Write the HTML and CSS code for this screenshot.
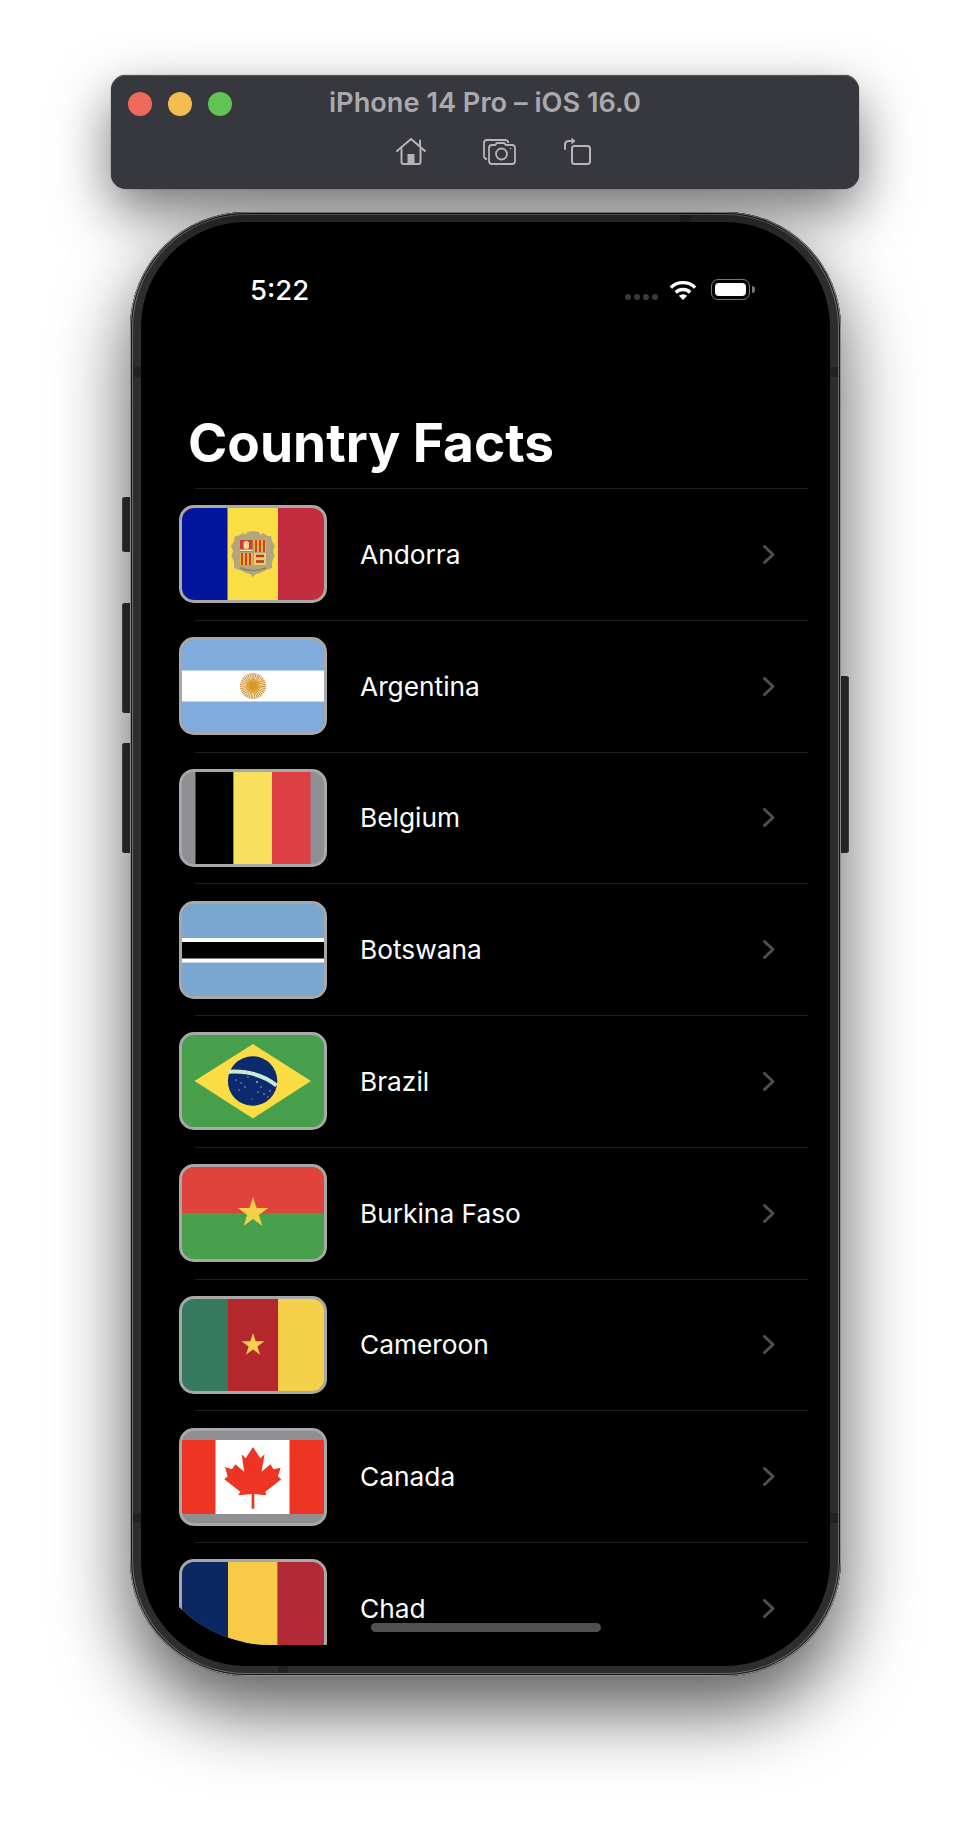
FILE: index.html
```html
<!DOCTYPE html>
<html lang="en">
<head>
    <meta charset="UTF-8">
    <meta name="viewport" content="width=device-width, initial-scale=1.0">
    <title>Country Facts</title>
    <link rel="stylesheet" href="styles.css">
</head>
<body>
    <header class="sim-bar">
        <div class="sim-top">
            <div class="lights">
                <span class="light light-red"></span>
                <span class="light light-yellow"></span>
                <span class="light light-green"></span>
            </div>
            <div class="sim-title">iPhone 14 Pro – iOS 16.0</div>
        </div>
        <div class="sim-tools">
            <svg class="tool tool-home" viewBox="0 0 30 27" fill="none" stroke="#b4b4b9" stroke-width="2" stroke-linejoin="round" stroke-linecap="round">
                <path d="M1 13 L15 1 L29 13"/>
                <path d="M24 8 V2.5"/>
                <path d="M5.5 11 V24 Q5.5 26 7.5 26 H22.500 Q24.500 26 24.500 24 V11"/>
                <rect x="11.500" y="16" width="7" height="10" fill="#b4b4b9" stroke="none"/>
            </svg>
            <svg class="tool tool-shot" viewBox="0 0 33 26" fill="none" stroke="#b4b4b9" stroke-width="1.800" stroke-linejoin="round">
                <path d="M4 20 Q1 20 1 17 V4 Q1 1 4 1 H22 Q25 1 25.500 4"/>
                <path d="M6 9 Q6 6 9 6 H12 L14 4 H21 L23 6 H29 Q32 6 32 9 V22 Q32 25 29 25 H9 Q6 25 6 22 Z"/>
                <circle cx="18.500" cy="15" r="5.500"/>
                <circle cx="27.500" cy="9.500" r="0.800" fill="#b4b4b9" stroke="none"/>
            </svg>
            <svg class="tool tool-rotate" viewBox="0 0 27 28" fill="none" stroke="#b4b4b9" stroke-width="2" stroke-linejoin="round" stroke-linecap="round">
                <rect x="8" y="9" width="18" height="18" rx="2.500"/>
                <path d="M1 12 V7.500 Q1 4 5 4 H8"/>
                <path d="M7.500 0.500 L11.500 4 L7.500 7.500 Z" fill="#b4b4b9" stroke="none"/>
            </svg>
        </div>
    </header>

    <div class="phone">
        <span class="side-btn btn-mute"></span>
        <span class="side-btn btn-up"></span>
        <span class="side-btn btn-down"></span>
        <span class="side-btn btn-power"></span>
        <span class="band band-top"></span>
        <span class="band band-bottom"></span>
        <span class="band band-left1"></span>
        <span class="band band-left2"></span>
        <span class="band band-right1"></span>
        <span class="band band-right2"></span>

        <main class="screen">
            <div class="status">
                <div class="time">5:22</div>
                <div class="status-icons">
                    <div class="dots"><i></i><i></i><i></i><i></i></div>
                    <svg class="wifi" viewBox="0 0 28 20" fill="none" stroke="#fff" stroke-width="3.400">
                        <path d="M1.800 7.600 A17.500 17.500 0 0 1 26.200 7.600"/>
                        <path d="M6.800 12.400 A10.500 10.500 0 0 1 21.200 12.400"/>
                        <path d="M9.800 15.800 Q14 12.600 18.200 15.800 L14 20 Z" fill="#fff" stroke="none"/>
                    </svg>
                    <div class="battery"><div class="battery-fill"></div></div>
                    <span class="battery-cap"></span>
                </div>
            </div>

            <h1 class="page-title">Country Facts</h1>

            <div class="list">
                <div class="divider"></div>
                <div class="row">
                    <div class="flag">
                        <svg viewBox="0 0 142 92">
                            <rect width="142" height="92" fill="#fbdd45"/>
                            <rect width="45.500" height="92" fill="#03149f"/>
                            <rect x="96" width="46" height="92" fill="#c22d3f"/>
                            <path d="M56 28 L61 25 L64 27 L65 24 L71 23 L77 24 L78 27 L81 25 L86 28 L89 28 L90 33 L93 38 L91 43 L92.500 48 L90 54 L90 60 L84 62 L78 65 L74 66 L71 69 L68 66 L64 65 L58 62 L52 60 L52 54 L49.500 48 L51 43 L49 38 L52 33 L53 28 Z" fill="#b1a67c"/>
                            <rect x="58" y="32" width="12.500" height="12" fill="#cf3b36"/>
                            <rect x="61.500" y="33" width="5.500" height="8" rx="2.500" fill="#f7e08a"/>
                            <rect x="58" y="41.500" width="12.500" height="1.800" fill="#f3e6c0"/>
                            <rect x="72" y="32" width="12" height="12" fill="#e7b53a"/>
                            <path d="M74 32 V44 M78 32 V44 M82 32 V44" stroke="#c8352c" stroke-width="1.800"/>
                            <rect x="58" y="45" width="12.500" height="12" fill="#e7b53a"/>
                            <path d="M60 45 V57 M64 45 V57 M68 45 V57" stroke="#c8352c" stroke-width="1.800"/>
                            <rect x="72" y="45" width="12" height="12" fill="#e4cf6a"/>
                            <path d="M74 48 H82 M74 53.500 H82" stroke="#b5372b" stroke-width="2.400"/>
                            <path d="M58 60 Q71 65 84 60" fill="none" stroke="#8b8362" stroke-width="1.500"/>
                        </svg>
                    </div>
                    <div class="name">Andorra</div>
                    <svg class="chevron" viewBox="0 0 12 19"><path d="M1.500 1.500 L10 9.500 L1.500 17.500"/></svg>
                </div>
                <div class="divider"></div>
                <div class="row">
                    <div class="flag">
                        <svg viewBox="0 0 142 92">
                            <rect width="142" height="92" fill="#7facdd"/>
                            <rect y="30.500" width="142" height="31" fill="#fff"/>
                            <circle cx="71" cy="46" r="9.500" fill="none" stroke="#c98a2f" stroke-width="7" stroke-dasharray="0.900 0.700"/>
                            <circle cx="71" cy="46" r="7" fill="#e5a52c"/>
                            <circle cx="71" cy="46" r="4" fill="#d9962a"/>
                        </svg>
                    </div>
                    <div class="name">Argentina</div>
                    <svg class="chevron" viewBox="0 0 12 19"><path d="M1.500 1.500 L10 9.500 L1.500 17.500"/></svg>
                </div>
                <div class="divider"></div>
                <div class="row">
                    <div class="flag">
                        <svg viewBox="0 0 142 92">
                            <rect x="13.500" width="38" height="92" fill="#000"/>
                            <rect x="51.500" width="38.500" height="92" fill="#f7e05e"/>
                            <rect x="90" width="38.500" height="92" fill="#dc4043"/>
                        </svg>
                    </div>
                    <div class="name">Belgium</div>
                    <svg class="chevron" viewBox="0 0 12 19"><path d="M1.500 1.500 L10 9.500 L1.500 17.500"/></svg>
                </div>
                <div class="divider"></div>
                <div class="row">
                    <div class="flag">
                        <svg viewBox="0 0 142 92">
                            <rect width="142" height="92" fill="#7aa7d0"/>
                            <rect y="34" width="142" height="24.500" fill="#fff"/>
                            <rect y="38" width="142" height="16.500" fill="#000"/>
                        </svg>
                    </div>
                    <div class="name">Botswana</div>
                    <svg class="chevron" viewBox="0 0 12 19"><path d="M1.500 1.500 L10 9.500 L1.500 17.500"/></svg>
                </div>
                <div class="divider"></div>
                <div class="row">
                    <div class="flag">
                        <svg viewBox="0 0 142 92">
                            <rect width="142" height="92" fill="#479f4c"/>
                            <polygon points="71,9 129,46 71,83.500 12.500,46" fill="#fbdc44"/>
                            <circle cx="70.600" cy="46" r="24.700" fill="#0c2a6e"/>
                            <path d="M46.500 36.800 Q75 35 94.500 50.500" fill="none" stroke="#cfe8d2" stroke-width="4"/>
                            <g fill="#aebbd8">
                                <circle cx="54" cy="45" r="0.700"/><circle cx="59" cy="48" r="0.700"/><circle cx="63" cy="52" r="0.800"/>
                                <circle cx="66" cy="42" r="0.700"/><circle cx="75" cy="47" r="0.900"/><circle cx="79" cy="52" r="0.800"/>
                                <circle cx="82" cy="59" r="0.800"/><circle cx="88" cy="56" r="0.800"/><circle cx="76" cy="57" r="0.700"/>
                                <circle cx="86" cy="62" r="0.700"/><circle cx="70" cy="64" r="0.600"/><circle cx="57" cy="55" r="0.700"/>
                            </g>
                        </svg>
                    </div>
                    <div class="name">Brazil</div>
                    <svg class="chevron" viewBox="0 0 12 19"><path d="M1.500 1.500 L10 9.500 L1.500 17.500"/></svg>
                </div>
                <div class="divider"></div>
                <div class="row">
                    <div class="flag">
                        <svg viewBox="0 0 142 92">
                            <rect width="142" height="46" fill="#e0433b"/>
                            <rect y="46" width="142" height="46" fill="#479f4c"/>
                            <polygon points="71,30 74.600,41.100 86.200,41.100 76.800,47.900 80.400,58.900 71,52.100 61.600,58.900 65.200,47.900 55.800,41.100 67.400,41.100" fill="#f5cf47"/>
                        </svg>
                    </div>
                    <div class="name">Burkina Faso</div>
                    <svg class="chevron" viewBox="0 0 12 19"><path d="M1.500 1.500 L10 9.500 L1.500 17.500"/></svg>
                </div>
                <div class="divider"></div>
                <div class="row">
                    <div class="flag">
                        <svg viewBox="0 0 142 92">
                            <rect width="46" height="92" fill="#36795f"/>
                            <rect x="46" width="50" height="92" fill="#b3272d"/>
                            <rect x="96" width="46" height="92" fill="#f5d04a"/>
                            <polygon points="71,34 73.700,42.300 82.400,42.300 75.400,47.400 78.100,55.700 71,50.600 63.900,55.700 66.600,47.400 59.600,42.300 68.300,42.300" fill="#f5d04a"/>
                        </svg>
                    </div>
                    <div class="name">Cameroon</div>
                    <svg class="chevron" viewBox="0 0 12 19"><path d="M1.500 1.500 L10 9.500 L1.500 17.500"/></svg>
                </div>
                <div class="divider"></div>
                <div class="row">
                    <div class="flag">
                        <svg viewBox="0 0 142 92">
                            <rect y="9" width="142" height="74" fill="#ee3524"/>
                            <rect x="33.500" y="9" width="74" height="74" fill="#fff"/>
                            <polygon points="71,16 78.300,27.300 82.600,23.300 79.600,40.700 88.300,33.300 91.600,38.300 98.600,36.700 96,45.300 99.300,48.300 83.300,60.700 84.300,64.300 72.300,63 72.300,77.700 69.600,77.700 69.600,63 56.300,64.300 58.300,60.700 42.300,48.300 45.600,45.300 43,36 50,38.300 53.300,33.300 62.300,40.700 59.600,23.300 63.600,27.300" fill="#ee3524"/>
                        </svg>
                    </div>
                    <div class="name">Canada</div>
                    <svg class="chevron" viewBox="0 0 12 19"><path d="M1.500 1.500 L10 9.500 L1.500 17.500"/></svg>
                </div>
                <div class="divider"></div>
                <div class="row">
                    <div class="flag">
                        <svg viewBox="0 0 142 92">
                            <rect width="46" height="92" fill="#0c2863"/>
                            <rect x="46" width="49.500" height="92" fill="#f7cb46"/>
                            <rect x="95.500" width="46.500" height="92" fill="#b32a37"/>
                        </svg>
                    </div>
                    <div class="name">Chad</div>
                    <svg class="chevron" viewBox="0 0 12 19"><path d="M1.500 1.500 L10 9.500 L1.500 17.500"/></svg>
                </div>
            </div>
            <div class="home-indicator"></div>
        </main>
    </div>
</body>
</html>
```

FILE: styles.css
```css
body {
    box-sizing: border-box;
    min-height: 1828px;
    margin: 0;
    padding: 75px 0 0;
    background: #fff;
    font-family: Inter, "Noto Sans", sans-serif;
}

.sim-bar {
    box-sizing: border-box;
    position: relative;
    z-index: 1;
    width: 748px;
    height: 114px;
    margin-left: 111px;
    padding-top: 17px;
    background: #37383d;
    border-radius: 15px;
    box-shadow: inset 0 1px 0 #55565a, 0 0 1px #222, 0 22px 55px rgba(0, 0, 0, 0.55);
}

.sim-top {
    display: flex;
    align-items: center;
    height: 24px;
}

.lights {
    display: flex;
    gap: 16px;
    margin-left: 17px;
}

.light {
    width: 24px;
    height: 24px;
    border-radius: 50%;
}

.light-red { background: #f0695e; }
.light-yellow { background: #f5bd4f; }
.light-green { background: #61c454; }

.sim-title {
    margin-left: 97px;
    color: #a9a9ae;
    font-size: 27.2px;
    font-weight: 600;
    white-space: nowrap;
    position: relative;
    top: -2px;
}

.sim-tools {
    display: flex;
    align-items: flex-end;
    margin: 21px 0 0 285px;
}

.tool { display: block; }
.tool-home { width: 30px; height: 27px; }
.tool-shot { width: 33px; height: 26px; margin-left: 57px; }
.tool-rotate { width: 27px; height: 28px; margin-left: 48px; }

.phone {
    box-sizing: border-box;
    position: relative;
    width: 711px;
    height: 1464px;
    margin: 23px 0 0 130px;
    padding: 10px 11px 10px 11px;
    background: #2d2d2e;
    border-radius: 116px;
    box-shadow: inset 0 0 0 1px #8c8c8c, inset 0 0 0 2px #161616, inset 0 0 0 3px #6a6a6a, 0 34px 75px rgba(0, 0, 0, 0.65);
}

.side-btn {
    position: absolute;
    width: 9px;
    background: #333;
    box-shadow: inset 1px 0 0 #555;
    z-index: -1;
}

.btn-mute { left: -8px; top: 285px; height: 55px; border-radius: 3px 0 0 3px; }
.btn-up { left: -8px; top: 391px; height: 110px; border-radius: 3px 0 0 3px; }
.btn-down { left: -8px; top: 531px; height: 110px; border-radius: 3px 0 0 3px; }
.btn-power { right: -8px; top: 464px; height: 177px; border-radius: 0 3px 3px 0; box-shadow: inset -1px 0 0 #555; }

.band {
    position: absolute;
    background: #222;
}

.band-top { left: 550px; top: 3px; width: 10px; height: 7px; }
.band-bottom { left: 148px; bottom: 3px; width: 10px; height: 7px; }
.band-left1 { left: 3px; top: 155px; width: 8px; height: 10px; }
.band-left2 { left: 3px; top: 1301px; width: 8px; height: 10px; }
.band-right1 { right: 3px; top: 155px; width: 8px; height: 10px; }
.band-right2 { right: 3px; top: 1301px; width: 8px; height: 10px; }

.screen {
    position: relative;
    height: 1444px;
    background: #000;
    border-radius: 105px;
    overflow: hidden;
}

.status {
    display: flex;
    justify-content: space-between;
    align-items: flex-start;
    box-sizing: border-box;
    height: 191px;
    padding: 52px 75px 0 109px;
    color: #fff;
}

.time {
    font-size: 27.5px;
    font-weight: 500;
    line-height: 32px;
}

.status-icons {
    display: flex;
    align-items: center;
    margin-top: 5px;
}

.dots {
    display: flex;
    gap: 3px;
    margin: 14px 11px 0 0;
}

.dots i {
    width: 6px;
    height: 6px;
    border-radius: 50%;
    background: #3b3b3b;
}

.wifi {
    width: 28px;
    height: 20px;
}

.battery {
    box-sizing: border-box;
    width: 39px;
    height: 21px;
    margin-left: 14px;
    padding: 3px;
    border: 1.5px solid #777;
    border-radius: 7px;
}

.battery-fill {
    height: 100%;
    background: #fff;
    border-radius: 4px;
}

.battery-cap {
    width: 3px;
    height: 7px;
    margin-left: 2px;
    background: #777;
    border-radius: 0 3px 3px 0;
}

.page-title {
    margin: 0;
    height: 75px;
    padding-left: 47px;
    color: #fff;
    font-size: 53.2px;
    font-weight: 700;
    line-height: 60px;
}

.list {
    height: 1157px;
    overflow: hidden;
    border-radius: 0 0 130px 130px;
}

.divider {
    height: 1px;
    margin: 0 22px 0 54px;
    background: #1c1c1e;
}

.row {
    display: flex;
    align-items: center;
    height: 130.75px;
    padding: 0 55px 0 38px;
}

.flag {
    box-sizing: border-box;
    flex: none;
    width: 148px;
    height: 98px;
    border: 3px solid #a8a8a8;
    border-radius: 15px;
    background: #8e8e93;
    overflow: hidden;
}

.flag svg {
    display: block;
    width: 142px;
    height: 92px;
}

.name {
    flex: 1;
    margin-left: 33px;
    color: #fff;
    font-size: 26.3px;
}

.chevron {
    width: 12px;
    height: 19px;
    fill: none;
    stroke: #4f4f4f;
    stroke-width: 3;
    stroke-linecap: round;
    stroke-linejoin: round;
}

.home-indicator {
    position: absolute;
    left: 230px;
    top: 1401px;
    width: 230px;
    height: 9px;
    border-radius: 5px;
    background: #505050;
}
```
